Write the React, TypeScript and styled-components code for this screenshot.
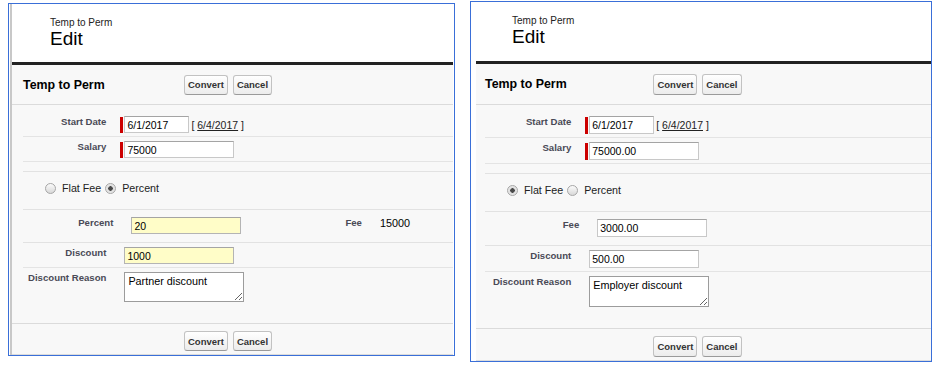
import React from "react";
import styled, {createGlobalStyle} from "styled-components";

const GlobalStyle = createGlobalStyle`
  body {
    margin: 0;
    background: #fff;
    font-family: "Liberation Sans", Arial, sans-serif;
  }
`;

interface Metrics {
  top: number;
  width: number;
  gap: number;
  rule: number;
  right: number;
  inset: number;
  head: number;
  title: number;
  field: number;
  area: number;
  btn: number;
}

type Mode = "flat" | "percent";

interface Conversion {
  mode: Mode;
  salary: string;
  percent?: string;
  fee: string;
  discount: string;
  reason: string;
  highlight: boolean;
}

const leftMetrics: Metrics = {top: 3, width: 447, gap: 1, rule: 2, right: 1, inset: 11, head: 58, title: 39, field: 17, area: 30, btn: 20};
const rightMetrics: Metrics = {top: 1, width: 462, gap: 5, rule: 0, right: 0, inset: 9, head: 59, title: 40, field: 18, area: 31, btn: 21};

const STANDARD = "calc(18% + 20px) 1fr";
const WIDE = "calc(18% + 28px) 1fr";
const SPLIT = "calc(18% + 27px) 34% calc(18% + 25px) 1fr";

const ConversionPanel = ({m, data}: { m: Metrics; data: Conversion }) => (
  <Panel $m={m}>
    <Sheet $rule={m.rule}>
      <Header>
        <Crumb>Temp to Perm</Crumb>
        <PageTitle>Edit</PageTitle>
      </Header>
      <Body>
        <ActionBar $place="top">
          <BarTitle>Temp to Perm</BarTitle>
          <Buttons>
            <Button>Convert</Button>
            <Button>Cancel</Button>
          </Buttons>
        </ActionBar>

        <Section $pt={7} $pb={9}>
          <Row $cols={STANDARD}>
            <Label>Start Date</Label>
            <Field>
              <ReqBar $on/>
              <TextInput $w={65} value="6/1/2017" readOnly/>
              <DateHint>[ <a>6/4/2017</a> ]</DateHint>
            </Field>
          </Row>
          <Row $cols={STANDARD}>
            <Label>Salary</Label>
            <Field>
              <ReqBar $on/>
              <TextInput $w={110} value={data.salary} readOnly/>
            </Field>
          </Row>
        </Section>

        <Choices>
          <Option>
            <RadioDot $checked={data.mode === "flat"}/>
            Flat Fee
          </Option>
          <Option>
            <RadioDot $checked={data.mode === "percent"}/>
            Percent
          </Option>
        </Choices>

        <Section $pt={3} $pb={5}>
          {data.mode === "percent" ? (
            <Row $cols={SPLIT} $last>
              <Label>Percent</Label>
              <Field>
                <ReqBar/>
                <TextInput $w={110} $yellow={data.highlight} value={data.percent} readOnly/>
              </Field>
              <Label>Fee</Label>
              <Value>{data.fee}</Value>
            </Row>
          ) : (
            <Row $cols={WIDE} $last>
              <Label>Fee</Label>
              <Field>
                <ReqBar/>
                <TextInput $w={110} $yellow={data.highlight} value={data.fee} readOnly/>
              </Field>
            </Row>
          )}
        </Section>

        <Section $pb={18} $open>
          <Row $cols={STANDARD}>
            <Label>Discount</Label>
            <Field>
              <ReqBar/>
              <TextInput $w={110} $yellow={data.highlight} value={data.discount} readOnly/>
            </Field>
          </Row>
          <Row $cols={STANDARD} $last>
            <Label>Discount Reason</Label>
            <Field>
              <ReqBar/>
              <Notes value={data.reason} readOnly/>
            </Field>
          </Row>
        </Section>

        <ActionBar $place="bottom">
          <BarTitle/>
          <Buttons>
            <Button>Convert</Button>
            <Button>Cancel</Button>
          </Buttons>
        </ActionBar>
      </Body>
    </Sheet>
  </Panel>
);

export default function App() {
  return (
    <>
      <GlobalStyle/>
      <Page>
        <ConversionPanel
          m={leftMetrics}
          data={{mode: "percent", salary: "75000", percent: "20", fee: "15000", discount: "1000", reason: "Partner discount", highlight: true}}
        />
        <ConversionPanel
          m={rightMetrics}
          data={{mode: "flat", salary: "75000.00", fee: "3000.00", discount: "500.00", reason: "Employer discount", highlight: false}}
        />
      </Page>
    </>
  );
}

const Page = styled.main`
    display: flex;
    align-items: flex-start;
    gap: 15px;
    padding-left: 8px;
`;

const Panel = styled.section<{ $m: Metrics }>`
    --inset: ${p => p.$m.inset}px;
    --head-h: ${p => p.$m.head}px;
    --title-h: ${p => p.$m.title}px;
    --field-h: ${p => p.$m.field}px;
    --area-h: ${p => p.$m.area}px;
    --btn-h: ${p => p.$m.btn}px;
    box-sizing: border-box;
    width: ${p => p.$m.width}px;
    margin-top: ${p => p.$m.top}px;
    padding: 0 ${p => p.$m.right}px 0 ${p => p.$m.gap}px;
    border: 1px solid #3a6fd8;
    background: #fff;
`;

const Sheet = styled.div<{ $rule: number }>`
    border-left: ${p => p.$rule}px solid #c8c8c8;
`;

const Header = styled.header`
    height: calc(var(--head-h) - 13px);
    padding: 13px 0 0 calc(27px + var(--inset));
    border-bottom: 3px solid #222;
    background: #fff;
`;

const Crumb = styled.div`
    font-size: 10px;
    line-height: 12px;
    color: #222;
`;

const PageTitle = styled.h1`
    margin: 0;
    font-size: 19px;
    line-height: 19px;
    font-weight: normal;
    color: #000;
`;

const Body = styled.div`
    background: #f8f8f8;
    border-bottom: 1px solid #dcdcdc;
`;

const ActionBar = styled.div<{ $place: "top" | "bottom" }>`
    display: flex;
    align-items: center;
    ${p => p.$place === "top"
        ? `height: var(--title-h); border-bottom: 1px solid #dbdbdb;`
        : `padding: 7px 0 3px; border-top: 1px solid #dbdbdb;`}
`;

const BarTitle = styled.h2`
    flex: 0 0 39%;
    box-sizing: border-box;
    margin: 0;
    padding-left: var(--inset);
    font-size: 12.4px;
    font-weight: bold;
    color: #000;
`;

const Buttons = styled.div`
    display: flex;
    gap: 5px;
`;

const Button = styled.button`
    box-sizing: border-box;
    height: var(--btn-h);
    padding: 0 3px;
    font-family: "Liberation Sans", Arial, sans-serif;
    font-size: 9.5px;
    font-weight: bold;
    color: #333;
    background: linear-gradient(#ffffff, #ececec);
    border: 1px solid #c2c2c2;
    border-bottom-color: #9a9a9a;
    border-radius: 3px;
`;

const Section = styled.div<{ $pt?: number; $pb?: number; $open?: boolean }>`
    margin-left: var(--inset);
    padding: ${p => p.$pt ?? 0}px 0 ${p => p.$pb ?? 0}px;
    border-bottom: ${p => (p.$open ? "none" : "1px solid #e2e2e2")};
`;

const Row = styled.div<{ $cols: string; $last?: boolean }>`
    display: grid;
    grid-template-columns: ${p => p.$cols};
    align-items: start;
    padding: 4px 0 3px;
    border-bottom: ${p => (p.$last ? "none" : "1px solid #e4e4e4")};
`;

const Label = styled.div`
    padding-right: 14px;
    text-align: right;
    font-size: 9.6px;
    line-height: 12px;
    font-weight: bold;
    color: #4a4a56;
    white-space: nowrap;
`;

const Field = styled.div`
    display: flex;
    align-items: center;
`;

const ReqBar = styled.span<{ $on?: boolean }>`
    flex: 0 0 3px;
    height: calc(var(--field-h) - 1px);
    margin-right: 1px;
    background: ${p => (p.$on ? "#c00" : "transparent")};
`;

const TextInput = styled.input<{ $w: number; $yellow?: boolean }>`
    box-sizing: border-box;
    width: ${p => p.$w}px;
    height: var(--field-h);
    margin: 0;
    padding: 0 2px;
    font-family: "Liberation Sans", Arial, sans-serif;
    font-size: 10.5px;
    color: #000;
    background: ${p => (p.$yellow ? "#fffdc8" : "#fff")};
    border: 1px solid ${p => (p.$yellow ? "#b4b4b4" : "#c8c8c8")};
    border-top-color: #a4a4a4;
    outline: none;
`;

const DateHint = styled.span`
    margin-left: 2px;
    font-size: 10.5px;
    color: #222;

    a {
        color: #222;
        text-decoration: underline;
    }
`;

const Value = styled.div`
    padding-left: 4px;
    font-size: 10.8px;
    line-height: 13px;
    color: #000;
`;

const Notes = styled.textarea`
    box-sizing: border-box;
    width: 120px;
    height: var(--area-h);
    margin: 0;
    padding: 2px 3px;
    font-family: "Liberation Sans", Arial, sans-serif;
    font-size: 10.8px;
    color: #000;
    background: #fff;
    border: 1px solid #9c9c9c;
    outline: none;
    resize: both;
`;

const Choices = styled.div`
    box-sizing: border-box;
    display: flex;
    align-items: center;
    height: 38px;
    margin-left: var(--inset);
    padding: 0 0 5px 22px;
    border-bottom: 1px solid #e2e2e2;
`;

const Option = styled.label`
    display: flex;
    align-items: center;
    gap: 6px;
    margin-right: 4px;
    font-size: 10.7px;
    color: #222;
`;

const RadioDot = styled.span<{ $checked?: boolean }>`
    box-sizing: border-box;
    width: 11px;
    height: 11px;
    border-radius: 50%;
    border: 1px solid #a6a6a6;
    background: ${p => (p.$checked
        ? "radial-gradient(circle, #4a4a4a 0 2px, #dcdcdc 2.5px, #f4f4f4 100%)"
        : "linear-gradient(#fbfbfb, #d8d8d8)")};
`;
